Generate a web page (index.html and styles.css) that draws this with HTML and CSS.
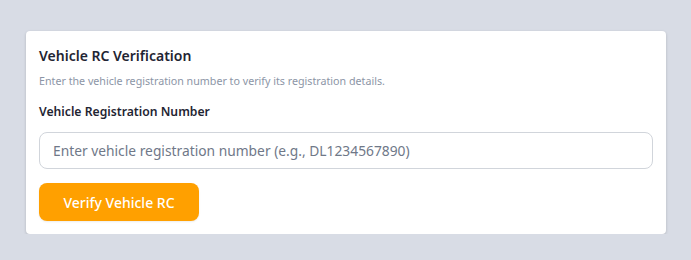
FILE: index.html
```html
<!DOCTYPE html>
<html lang="en">
  <head>
    <meta charset="UTF-8" />
    <meta name="viewport" content="width=device-width, initial-scale=1.0" />
    <title>Vehicle RC Verification</title>
    <link rel="stylesheet" href="styles.css">
  </head>
  <body>
    <div class="card">
      <h2 class="card-title">Vehicle RC Verification</h2>
      <p class="card-desc">Enter the vehicle registration number to verify its registration details.</p>
      <label class="field-label" for="rc">Vehicle Registration Number</label>
      <input id="rc" class="field-input" type="text" placeholder="Enter vehicle registration number (e.g., DL1234567890)" />
      <button class="btn-verify">Verify Vehicle RC</button>
    </div>
  </body>
</html>
```

FILE: styles.css
```css
* {
  margin: 0;
  padding: 0;
  box-sizing: border-box;
}
body {
  background-color: #d8dce5;
  font-family: "Noto Sans", "Open Sans", sans-serif;
  padding: 31px 25px 0 26px;
}
.card {
  width: 640px;
  height: 203px;
  background-color: #fff;
  border-radius: 4px;
  box-shadow: 0 1px 3px rgba(0, 0, 0, 0.18);
  padding: 15px 13px 13px;
  display: flex;
  flex-direction: column;
  align-items: flex-start;
}
.card-title {
  font-size: 14px;
  font-weight: 600;
  color: #1f2533;
  line-height: 20px;
}
.card-desc {
  font-size: 10.7px;
  color: #8c95a6;
  margin-top: 8px;
  line-height: 14px;
}
.field-label {
  font-size: 12.2px;
  font-weight: 600;
  color: #1f2533;
  margin-top: 15px;
  line-height: 18px;
}
.field-input {
  width: 100%;
  height: 37px;
  margin-top: 11px;
  border: 1px solid #d1d5db;
  border-radius: 8px;
  padding: 0 13px;
  font-family: inherit;
  font-size: 13.8px;
  color: #374151;
  outline: none;
}
.field-input::placeholder {
  color: #6f7888;
}
.btn-verify {
  margin-top: 14px;
  width: 160px;
  height: 38px;
  background-color: #ffa000;
  color: #fff;
  border: none;
  border-radius: 8px;
  font-family: inherit;
  font-size: 14px;
  font-weight: 500;
  box-shadow: 0 1px 2px rgba(0, 0, 0, 0.08);
}
```
